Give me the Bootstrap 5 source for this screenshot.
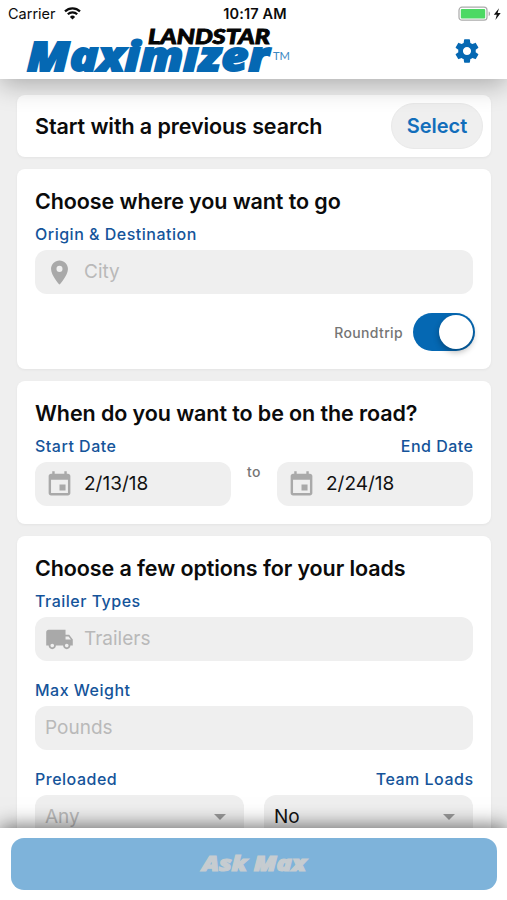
<!DOCTYPE html>
<html lang="en">
<head>
<meta charset="utf-8">
<meta name="viewport" content="width=device-width, initial-scale=1">
<title>Landstar Maximizer</title>
<link href="https://cdn.jsdelivr.net/npm/bootstrap@5.3.0/dist/css/bootstrap.min.css" rel="stylesheet">
<style>
body{font-family:Inter,"Liberation Sans",sans-serif;background:#efefef;color:#0b0b0b}
.app-screen{height:900px;width:507px}
.top-bar{height:79px;z-index:2;box-shadow:0 6px 24px rgba(0,0,0,.28)}
.status-row{height:27px;padding-left:8px;padding-right:5px;font-size:14.5px}
.status-row>div{width:33.333%}
.clock-text{font-weight:600;letter-spacing:.15px;white-space:nowrap}
.brand-row{height:51px;padding:0 26px 0 24px}
.scroll-area{padding:16px 16px 0 17px;gap:12px}
.panel{background:#fff;border-radius:8px;box-shadow:0 1px 3px rgba(0,0,0,.05);padding:0 18px;flex-shrink:0}
.panel-search{height:62px;padding-right:8px}
.panel-place{height:200px}
.panel-dates{height:143px}
.panel-loads{height:400px}
.panel h2{font-size:21.5px;font-weight:600;line-height:26px;margin:0;letter-spacing:-.09px;white-space:nowrap}
.panel-place h2,.panel-dates h2,.panel-loads h2{padding-top:19px;height:45px}
.btn-select{width:92px;height:46px;background:#efefef;color:#126ebb;font-size:20px;font-weight:600;border-radius:23px;padding:0;border:1px solid #e9e9e9}
.field-label{font-size:16px;line-height:20px;font-weight:500;color:#15549a;height:20px;letter-spacing:.5px;margin-right:-.5px;white-space:nowrap}
.label-row{padding-top:10px;height:36px}
.label-row-spaced{padding-top:19px;height:45px}
.field-box{height:44px;background:#efefef;border-radius:12px;font-size:19px;padding-left:10px;color:#111}
.field-box svg{flex:none}
.field-hint{color:#b9b9b9}
.icon-slot{width:29px;margin-right:10px}
.date-box{width:196px}
.pick-box{width:209px;padding-right:18px}
.small-note{color:#757575;font-size:14px;font-weight:500;letter-spacing:.35px}
.note-to{margin-top:-1px}
.trip-row{padding-top:19px;margin-right:-2px}
.trip-row .small-note{margin-right:10px}
.trip-switch{width:62px;height:38px;border-radius:19px;background:#0568b3;padding:2px}
.trip-knob{width:34px;height:34px;border-radius:50%;background:#fff;box-shadow:0 3px 6px rgba(0,0,0,.3)}
.bottom-bar{height:72px;z-index:2;padding:10px 10px 10px 11px;box-shadow:0 -1px 20px rgba(0,0,0,.62)}
.btn-ask,.btn-ask:hover{height:52px;border-radius:13px;background:#7eb3da;padding:0;border:0}
.gear-icon{margin-top:10px}
svg{display:block;overflow:visible}
</style>
</head>
<body>
<div class="app-screen d-flex flex-column overflow-hidden">
<header class="top-bar bg-white position-relative flex-shrink-0">
  <div class="status-row d-flex align-items-center">
    <div class="d-flex align-items-center"><span>Carrier</span>
      <svg style="" class="ms-2" width="17" height="13" viewBox="0 0 17 13" fill="none" stroke="#0b0b0b" stroke-width="2.2"><path d="M1 4.4a10.8 10.8 0 0 1 15 0M3.8 7.3a6.7 6.7 0 0 1 9.4 0"/><path d="M8.5 12.6L5.9 9.9a3.7 3.7 0 0 1 5.2 0z" fill="#0b0b0b" stroke="none"/></svg>
    </div>
    <div class="clock-text text-center">10:17 AM</div>
    <div class="d-flex justify-content-end">
      <svg width="44" height="16" viewBox="0 0 44 16"><rect x="1" y="1.2" width="28" height="13" rx="3" fill="#fff" stroke="#aaa" stroke-width="1.2"/><rect x="2.8" y="3" width="24.4" height="9.4" rx="1" fill="#4cd964"/><path d="M30.7 5.5c1.8.5 1.8 4 0 4.5z" fill="#aaa"/><path d="M41 2.2L35.8 8.8h3L37.4 14l5.3-7h-3.1z" fill="#111"/></svg>
    </div>
  </div>
  <div class="brand-row d-flex justify-content-between">
    <svg width="270" height="51" viewBox="24 27 270 51" font-weight="900" font-style="italic" role="img" aria-label="Landstar Maximizer">
      <text x="27" y="70.5" font-family="'Open Sans',sans-serif" font-size="40.5" fill="#0568b3" stroke="#0568b3" stroke-width="1.8" textLength="242" lengthAdjust="spacingAndGlyphs">Maximızer</text>
      <text x="148" y="43.7" font-family="Lato,sans-serif" font-size="21.5" fill="#050505" stroke="#050505" stroke-width=".9" textLength="122" lengthAdjust="spacingAndGlyphs">LANDSTAR</text>
      <text x="273" y="59.5" font-family="Lato,sans-serif" font-size="12" font-weight="400" font-style="normal" fill="#3b87c2" textLength="17" lengthAdjust="spacingAndGlyphs">TM</text>
    </svg>
    <svg class="gear-icon" width="28" height="28" viewBox="0 0 24 24" fill="#0568b3"><path d="M19.43 12.98c.04-.32.07-.64.07-.98s-.03-.66-.07-.98l2.11-1.65c.19-.15.24-.42.12-.64l-2-3.46c-.12-.22-.39-.3-.61-.22l-2.49 1c-.52-.4-1.08-.73-1.69-.98l-.38-2.65C14.46 2.18 14.25 2 14 2h-4c-.25 0-.46.18-.49.42l-.38 2.65c-.61.25-1.17.59-1.69.98l-2.49-1c-.23-.09-.49 0-.61.22l-2 3.46c-.13.22-.07.49.12.64l2.11 1.65c-.04.32-.07.65-.07.98s.03.66.07.98l-2.11 1.65c-.19.15-.24.42-.12.64l2 3.46c.12.22.39.3.61.22l2.49-1c.52.4 1.08.73 1.69.98l.38 2.65c.03.24.24.42.49.42h4c.25 0 .46-.18.49-.42l.38-2.65c.61-.25 1.17-.59 1.69-.98l2.49 1c.23.09.49 0 .61-.22l2-3.46c.12-.22.07-.49-.12-.64l-2.11-1.65zM12 15.5c-1.93 0-3.5-1.57-3.5-3.5s1.57-3.5 3.5-3.5 3.5 1.57 3.5 3.5-1.57 3.5-3.5 3.5z"/></svg>
  </div>
</header>

<main class="scroll-area d-flex flex-column flex-grow-1 overflow-hidden">
  <section class="panel panel-search d-flex align-items-center justify-content-between">
    <h2>Start with a previous search</h2>
    <button type="button" class="btn btn-select">Select</button>
  </section>

  <section class="panel panel-place">
    <h2>Choose where you want to go</h2>
    <div class="label-row"><div class="field-label">Origin &amp; Destination</div></div>
    <div class="field-box d-flex align-items-center">
      <div class="icon-slot d-flex justify-content-center"><svg width="29" height="29" viewBox="0 0 24 24" fill="#a9a9a9"><path d="M12 2C8.13 2 5 5.13 5 9c0 5.25 7 13 7 13s7-7.75 7-13c0-3.87-3.13-7-7-7zm0 9.5a2.5 2.5 0 0 1 0-5 2.5 2.5 0 0 1 0 5z"/></svg></div>
      <span class="field-hint">City</span>
    </div>
    <div class="trip-row d-flex justify-content-end align-items-center">
      <span class="small-note">Roundtrip</span>
      <div class="trip-switch d-flex justify-content-end" role="switch" aria-checked="true"><div class="trip-knob"></div></div>
    </div>
  </section>

  <section class="panel panel-dates">
    <h2>When do you want to be on the road?</h2>
    <div class="label-row d-flex justify-content-between"><div class="field-label">Start Date</div><div class="field-label">End Date</div></div>
    <div class="d-flex justify-content-between">
      <div class="field-box date-box d-flex align-items-center">
        <div class="icon-slot"><svg width="29" height="29" viewBox="0 0 24 24" fill="#a9a9a9"><path d="M17 12h-5v5h5v-5zM16 1v2H8V1H6v2H5c-1.11 0-1.99.9-1.99 2L3 19c0 1.1.89 2 2 2h14c1.1 0 2-.9 2-2V5c0-1.1-.9-2-2-2h-1V1h-2zm3 18H5V8h14v11z"/></svg></div>
        <span>2/13/18</span>
      </div>
      <span class="small-note note-to">to</span>
      <div class="field-box date-box d-flex align-items-center">
        <div class="icon-slot"><svg width="29" height="29" viewBox="0 0 24 24" fill="#a9a9a9"><path d="M17 12h-5v5h5v-5zM16 1v2H8V1H6v2H5c-1.11 0-1.99.9-1.99 2L3 19c0 1.1.89 2 2 2h14c1.1 0 2-.9 2-2V5c0-1.1-.9-2-2-2h-1V1h-2zm3 18H5V8h14v11z"/></svg></div>
        <span>2/24/18</span>
      </div>
    </div>
  </section>

  <section class="panel panel-loads">
    <h2>Choose a few options for your loads</h2>
    <div class="label-row"><div class="field-label">Trailer Types</div></div>
    <div class="field-box d-flex align-items-center">
      <div class="icon-slot"><svg width="29" height="29" viewBox="0 0 24 24" fill="#a9a9a9"><path d="M20 8h-3V4H3c-1.1 0-2 .9-2 2v11h2c0 1.66 1.34 3 3 3s3-1.34 3-3h6c0 1.66 1.34 3 3 3s3-1.34 3-3h2v-5l-3-4zM6 18.5c-.83 0-1.5-.67-1.5-1.5s.67-1.5 1.5-1.5 1.5.67 1.5 1.5-.67 1.5-1.5 1.5zm13.5-9l1.96 2.5H17V9.5h2.5zm-1.5 9c-.83 0-1.5-.67-1.5-1.5s.67-1.5 1.5-1.5 1.5.67 1.5 1.5-.67 1.5-1.5 1.5z"/></svg></div>
      <span class="field-hint">Trailers</span>
    </div>
    <div class="label-row-spaced"><div class="field-label">Max Weight</div></div>
    <div class="field-box d-flex align-items-center"><span class="field-hint">Pounds</span></div>
    <div class="label-row-spaced d-flex justify-content-between"><div class="field-label">Preloaded</div><div class="field-label">Team Loads</div></div>
    <div class="d-flex justify-content-between">
      <div class="field-box pick-box d-flex align-items-center justify-content-between"><span class="field-hint">Any</span><svg width="12" height="6" viewBox="0 0 12 6" fill="#999"><path d="M0 0h12L6 6z"/></svg></div>
      <div class="field-box pick-box d-flex align-items-center justify-content-between"><span>No</span><svg width="12" height="6" viewBox="0 0 12 6" fill="#999"><path d="M0 0h12L6 6z"/></svg></div>
    </div>
  </section>
</main>

<footer class="bottom-bar bg-white position-relative flex-shrink-0">
  <button type="button" class="btn btn-ask w-100 d-flex align-items-center justify-content-center">
    <svg width="110" height="30" viewBox="0 0 110 30" font-family="'Open Sans',sans-serif" font-weight="900" font-style="italic"><text x="3" y="21.5" font-size="21" fill="#c6ccd0" stroke="#c6ccd0" stroke-width="1.2" textLength="104" lengthAdjust="spacingAndGlyphs">Ask Max</text></svg>
  </button>
</footer>
</div>
<script src="https://cdn.jsdelivr.net/npm/bootstrap@5.3.0/dist/js/bootstrap.bundle.min.js"></script>
</body>
</html>
